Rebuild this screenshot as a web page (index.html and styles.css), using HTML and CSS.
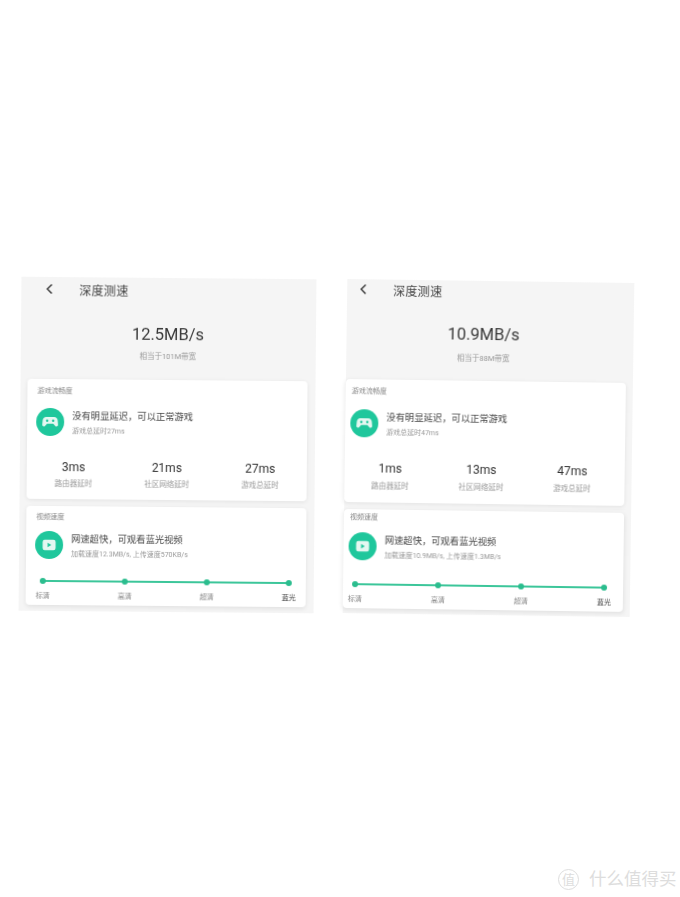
FILE: index.html
```html
<!DOCTYPE html>
<html lang="zh-CN">
<head>
    <meta charset="UTF-8">
    <meta name="viewport" content="width=device-width, initial-scale=1.0">
    <title>深度测速</title>
    <link rel="stylesheet" href="styles.css">
</head>
<body>
    <svg width="0" height="0" class="defs">
        <symbol id="icon-game" viewBox="0 0 28 28">
            <circle cx="14" cy="14" r="14" fill="#1fc79c"/>
            <path d="M10 9h8c2 0 3.200 1.400 3.500 3.300l.4 4.200c.2 1.700-1.700 2.600-2.800 1.400l-2-2.100h-6.200l-2 2.100c-1.100 1.200-3 .3-2.800-1.400l.4-4.200c.3-1.900 1.500-3.300 3.500-3.300z" fill="#e4f7f1"/>
            <circle cx="11" cy="12.800" r="1.200" fill="#1fc79c"/>
            <circle cx="17" cy="12.800" r="1.200" fill="#1fc79c"/>
        </symbol>
        <symbol id="icon-video" viewBox="0 0 28 28">
            <circle cx="14" cy="14" r="14" fill="#1fc79c"/>
            <rect x="7.500" y="8.800" width="13" height="10.500" rx="2.200" fill="#e4f7f1"/>
            <path d="M12.500 11.800l3.700 2.200-3.700 2.200z" fill="#1fc79c"/>
        </symbol>
        <symbol id="icon-back" viewBox="0 0 8 12">
            <path d="M6.500 1.500L2 6l4.500 4.500" fill="none" stroke="#333" stroke-width="1.400"/>
        </symbol>
    </svg>

    <div class="shots">
        <!-- First test -->
        <div class="panel panel-left">
            <div class="header">
                <svg class="back"><use href="#icon-back"/></svg>
                <div class="header-title">深度测速</div>
            </div>
            <div class="summary">
                <div class="speed">12.5MB/s</div>
                <div class="speed-note">相当于101M带宽</div>
            </div>
            <div class="card card-game">
                <div class="card-title">游戏流畅度</div>
                <div class="status">
                    <svg class="status-icon"><use href="#icon-game"/></svg>
                    <div class="status-body">
                        <div class="status-text">没有明显延迟，可以正常游戏</div>
                        <div class="status-note">游戏总延时27ms</div>
                    </div>
                </div>
                <div class="metrics">
                    <div class="metric"><div class="metric-value">3ms</div><div class="metric-label">路由器延时</div></div>
                    <div class="metric"><div class="metric-value">21ms</div><div class="metric-label">社区网络延时</div></div>
                    <div class="metric"><div class="metric-value">27ms</div><div class="metric-label">游戏总延时</div></div>
                </div>
            </div>
            <div class="card card-video">
                <div class="card-title">视频速度</div>
                <div class="status">
                    <svg class="status-icon"><use href="#icon-video"/></svg>
                    <div class="status-body">
                        <div class="status-text">网速超快，可观看蓝光视频</div>
                        <div class="status-note">加载速度12.3MB/s, 上传速度570KB/s</div>
                    </div>
                </div>
                <div class="scale">
                    <div class="stop"><span class="dot"></span><span class="stop-label">标清</span></div>
                    <div class="stop"><span class="dot"></span><span class="stop-label">高清</span></div>
                    <div class="stop"><span class="dot"></span><span class="stop-label">超清</span></div>
                    <div class="stop"><span class="dot"></span><span class="stop-label stop-best">蓝光</span></div>
                </div>
            </div>
        </div>

        <!-- Second test -->
        <div class="panel panel-right">
            <div class="header">
                <svg class="back"><use href="#icon-back"/></svg>
                <div class="header-title">深度测速</div>
            </div>
            <div class="summary">
                <div class="speed">10.9MB/s</div>
                <div class="speed-note">相当于88M带宽</div>
            </div>
            <div class="card card-game">
                <div class="card-title">游戏流畅度</div>
                <div class="status">
                    <svg class="status-icon"><use href="#icon-game"/></svg>
                    <div class="status-body">
                        <div class="status-text">没有明显延迟，可以正常游戏</div>
                        <div class="status-note">游戏总延时47ms</div>
                    </div>
                </div>
                <div class="metrics">
                    <div class="metric"><div class="metric-value">1ms</div><div class="metric-label">路由器延时</div></div>
                    <div class="metric"><div class="metric-value">13ms</div><div class="metric-label">社区网络延时</div></div>
                    <div class="metric"><div class="metric-value">47ms</div><div class="metric-label">游戏总延时</div></div>
                </div>
            </div>
            <div class="card card-video">
                <div class="card-title">视频速度</div>
                <div class="status">
                    <svg class="status-icon"><use href="#icon-video"/></svg>
                    <div class="status-body">
                        <div class="status-text">网速超快，可观看蓝光视频</div>
                        <div class="status-note">加载速度10.9MB/s, 上传速度1.3MB/s</div>
                    </div>
                </div>
                <div class="scale">
                    <div class="stop"><span class="dot"></span><span class="stop-label">标清</span></div>
                    <div class="stop"><span class="dot"></span><span class="stop-label">高清</span></div>
                    <div class="stop"><span class="dot"></span><span class="stop-label">超清</span></div>
                    <div class="stop"><span class="dot"></span><span class="stop-label stop-best">蓝光</span></div>
                </div>
            </div>
        </div>
    </div>

    <!-- Site watermark -->
    <div class="watermark">
        <span class="watermark-mark">值</span>
        <span class="watermark-name">什么值得买</span>
    </div>
</body>
</html>
```

FILE: styles.css
```css
/* Base styles */
body {
    margin: 0;
    height: 897px;
    overflow: hidden;
    position: relative;
    background: #fff;
    color: #333;
    font-family: "Roboto", "Noto Sans CJK SC", sans-serif;
}

.defs {
    position: absolute;
}

/* The two photographed phone screens */
.shots {
    display: flex;
    align-items: flex-start;
    gap: 30px;
    padding: 278px 0 0 20px;
}

.panel {
    box-sizing: border-box;
    height: 334px;
    background: #f5f5f5;
    filter: blur(0.6px);
}

.panel-left {
    width: 295px;
    padding: 0 8px 0 7px;
    transform: rotate(0.5deg);
}

.panel-right {
    width: 287px;
    margin-top: 3px;
    padding: 0 7px 0 0;
    transform: rotate(0.8deg);
}

/* Header */
.header {
    display: flex;
    align-items: center;
    height: 24px;
    padding-left: 17px;
}

.panel-right .header {
    height: 20px;
    padding-left: 12px;
}

.back {
    width: 8px;
    height: 12px;
    margin-right: 26px;
}

.header-title {
    font-size: 12px;
    color: #444;
    letter-spacing: 0.3px;
}

/* Speed summary */
.summary {
    padding-top: 23px;
    margin-bottom: 18px;
    text-align: center;
}

.panel-right .summary {
    padding-top: 24px;
    margin-bottom: 17px;
    padding-right: 6px;
}

.speed {
    font-size: 16.500px;
    line-height: 20px;
    color: #3a3a3a;
}

.speed-note {
    margin-top: 7px;
    font-size: 7.500px;
    line-height: 10px;
    color: #999;
}

.panel-right .speed-note {
    margin-top: 9px;
}

/* Cards */
.card {
    box-sizing: border-box;
    background: #fff;
    border-radius: 4px;
    box-shadow: 0 1px 4px rgba(0, 0, 0, 0.08);
    padding-top: 8px;
}

.card-game {
    height: 120px;
    margin-bottom: 7px;
}

.panel-right .card-game {
    height: 123px;
}

.card-video {
    height: 99px;
    padding-top: 7px;
}

.panel-right .card-video {
    padding-top: 4px;
}

.card-title {
    padding-left: 10px;
    font-size: 7px;
    line-height: 8px;
    color: #888;
}

.panel-right .card-title {
    padding-left: 6px;
}

.status {
    display: flex;
    align-items: flex-start;
    gap: 8px;
    margin-top: 13px;
    padding-left: 9px;
}

.panel-right .status {
    margin-top: 14px;
    padding-left: 5px;
}

.card-video .status {
    margin-top: 10px;
}

.panel-right .card-video .status {
    margin-top: 11px;
}

.status-icon {
    width: 28px;
    height: 28px;
    flex-shrink: 0;
}

.status-body {
    padding-top: 2px;
}

.status-text {
    font-size: 9.300px;
    line-height: 12px;
    color: #444;
}

.status-note {
    margin-top: 4.500px;
    font-size: 7px;
    line-height: 9px;
    color: #999;
}

/* Latency numbers */
.metrics {
    display: grid;
    grid-template-columns: repeat(3, 1fr);
    margin-top: 24px;
    text-align: center;
}

.panel-right .metrics {
    margin-right: 7px;
}

.metric-value {
    font-size: 12px;
    line-height: 14px;
    color: #333;
}

.metric-label {
    margin-top: 5px;
    font-size: 7.500px;
    line-height: 10px;
    color: #999;
}

.panel-right .metric-label {
    margin-top: 6px;
}

/* Video quality scale */
.scale {
    display: flex;
    justify-content: space-between;
    position: relative;
    margin: 19px 10px 0 10px;
}

.panel-right .scale {
    margin: 21px 12px 0 5px;
}

.scale::before {
    content: "";
    position: absolute;
    left: 7px;
    right: 7px;
    top: 2px;
    height: 2px;
    background: #3cc69a;
}

.stop {
    display: flex;
    flex-direction: column;
    align-items: center;
    width: 14px;
    position: relative;
}

.dot {
    width: 6px;
    height: 6px;
    border-radius: 50%;
    background: #2bbd8e;
}

.stop-label {
    margin-top: 7px;
    font-size: 7px;
    line-height: 10px;
    color: #888;
    white-space: nowrap;
}

.stop-best {
    color: #444;
}

/* Watermark in the corner */
.watermark {
    position: absolute;
    left: 558px;
    top: 868px;
    display: flex;
    align-items: center;
    gap: 10px;
    color: #ddd;
    white-space: nowrap;
}

.watermark-mark {
    box-sizing: border-box;
    width: 21px;
    height: 21px;
    border: 1px solid #ddd;
    border-radius: 50%;
    font-size: 13px;
    line-height: 19px;
    text-align: center;
}

.watermark-name {
    font-size: 17.500px;
    line-height: 22px;
}
```
